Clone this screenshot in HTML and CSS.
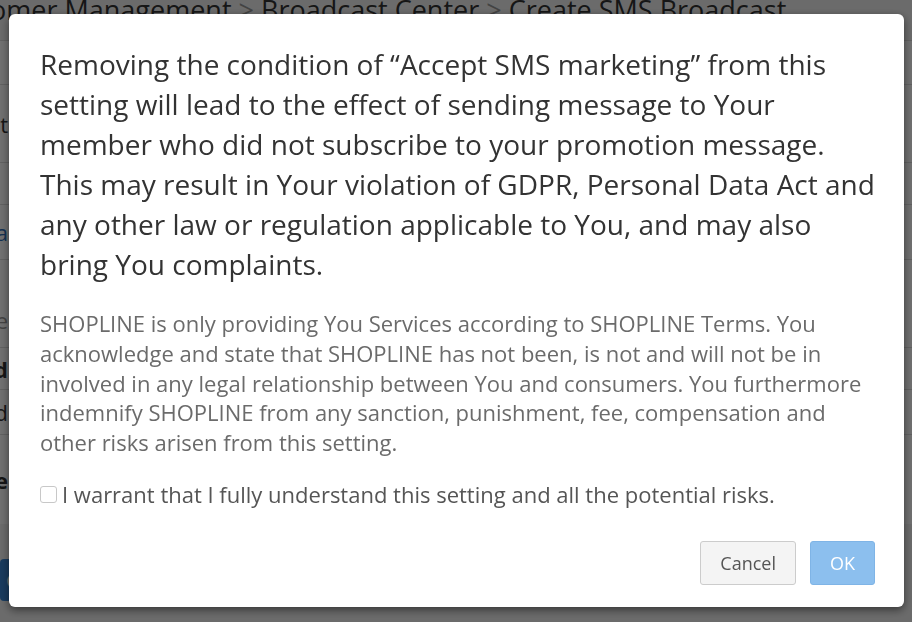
FILE: index.html
```html
<!DOCTYPE html>
<html>
    <head>
        <meta charset="UTF-8">
        <link rel="stylesheet" href="styles.css">
        <title>Create SMS Broadcast</title>
    </head>
    <body>
        <div class="页面">
            <h1 class="面包屑">Customer Management <span class="分隔">&gt;</span> Broadcast Center <span class="分隔">&gt;</span> Create SMS Broadcast</h1>
            <div class="卡片">
                <div class="行 高44"></div>
                <div class="行 高78"><span class="标签">Content</span></div>
                <div class="行 高42"></div>
                <div class="行 高55"><span class="标签 链接">Add media</span></div>
                <div class="行 高88 偏下"><span class="标签 灰">Store</span></div>
                <div class="行 高42"><b class="标签">Send</b></div>
                <div class="行 高45"><span class="标签">Hold</span></div>
                <div class="行 高90"><b class="标签">Schedule</b></div>
            </div>
            <button class="蓝按钮">Continue</button>
        </div>

        <div class="遮罩"></div>
        <div class="对话框">
            <p class="警告">Removing the condition of “Accept SMS marketing” from this setting will lead to the effect of sending message to Your member who did not subscribe to your promotion message. This may result in Your violation of GDPR, Personal Data Act and any other law or regulation applicable to You, and may also bring You complaints.</p>
            <p class="说明">SHOPLINE is only providing You Services according to SHOPLINE Terms. You acknowledge and state that SHOPLINE has not been, is not and will not be in involved in any legal relationship between You and consumers. You furthermore indemnify SHOPLINE from any sanction, punishment, fee, compensation and other risks arisen from this setting.</p>
            <label class="确认"><input type="checkbox" /><span>I warrant that I fully understand this setting and all the potential risks.</span></label>
            <div class="按钮栏">
                <button class="取消">Cancel</button>
                <button class="确定">OK</button>
            </div>
        </div>
    </body>
</html>
```

FILE: styles.css
```css
:root {
    font-family: "Open Sans", "Liberation Sans", sans-serif;
}

body {
    margin: 0;
    background: #f3f3f3;
    color: #333;
    overflow: hidden;
}

    .页面 {
        height: 622px;
    }

    .面包屑 {
        margin: 0;
        height: 48px;
        font-size: 27px;
        font-weight: normal;
        line-height: 27px;
        margin-top: -4px;
        margin-bottom: -4px;
        text-indent: -66px;
        white-space: nowrap;
        color: #333;
    }

    .分隔 {
        color: #999;
    }

    .卡片 {
        background: #fff;
        border-top: 1px solid #ddd;
    }

    .行 {
        border-bottom: 1px solid #ddd;
        display: flex;
        align-items: center;
        font-size: 22px;
    }

    /* 标签只露出末尾几个字母 */
    .标签 {
        display: flex;
        justify-content: flex-end;
        width: 8px;
        white-space: nowrap;
    }

    .偏下 {
        align-items: flex-start;
    }

    .偏下 .标签 {
        margin-top: 45px;
    }

    .高44 { height: 43px; }
    .高78 { height: 77px; }
    .高42 { height: 41px; }
    .高55 { height: 54px; }
    .高88 { height: 87px; }
    .高45 { height: 44px; }
    .高90 { height: 89px; border-bottom: 0; }

    .链接 {
        color: #2b6fb8;
    }

    .灰 {
        color: #999;
    }

    .蓝按钮 {
        display: block;
        margin-top: 35px;
        width: 260px;
        height: 42px;
        border: 0;
        border-radius: 4px;
        background: #3a87d6;
        color: #fff;
        font-family: inherit;
        font-size: 20px;
        text-align: left;
    }

    /* 遮罩与对话框叠在页面之上 */
    .遮罩 {
        position: fixed;
        inset: 0;
        background: rgba(0, 0, 0, 0.56);
    }

    .对话框 {
        position: fixed;
        left: 9px;
        top: 14px;
        width: 838px;
        padding: 30px 26px 22px 31px;
        background: #fff;
        border-radius: 6px;
        box-shadow: 0 3px 9px rgba(0, 0, 0, 0.5);
    }

    .警告 {
        margin: 0;
        font-size: 28px;
        line-height: 40px;
        color: #333;
    }

    .说明 {
        margin: 25px 0 0;
        font-size: 22px;
        line-height: 29.75px;
        color: #6b6b6b;
    }

    .确认 {
        display: flex;
        align-items: center;
        margin-top: 21px;
        height: 30px;
        font-size: 22px;
        color: #555;
    }

    .确认 input {
        -webkit-appearance: none;
        appearance: none;
        width: 17px;
        height: 17px;
        margin: 2px 5px 0 0;
        border: 1px solid #c8c8c8;
        border-radius: 3px;
        background: #fff;
    }

    .按钮栏 {
        display: flex;
        justify-content: flex-end;
        gap: 14px;
        margin-top: 32px;
        padding-right: 3px;
    }

    .按钮栏 button {
        height: 44px;
        border-radius: 3px;
        font-family: inherit;
        font-size: 18px;
        padding: 0 19px;
    }

    .取消 {
        background: #f4f4f4;
        border: 1px solid #ccc;
        color: #555;
    }

    .确定 {
        background: #8cbfee;
        border: 1px solid #7fb4e6;
        color: #fff;
    }
```
